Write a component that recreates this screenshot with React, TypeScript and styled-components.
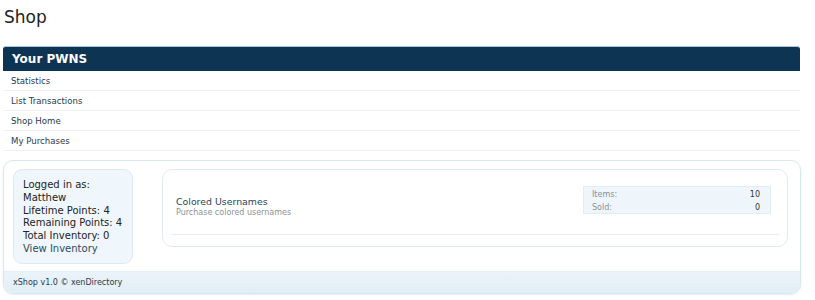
import React from 'react';
import styled, { createGlobalStyle } from 'styled-components';

const GlobalStyle = createGlobalStyle`
  body {
    margin: 0;
    background: #fff;
    font-family: "DejaVu Sans", Verdana, sans-serif;
  }
`;

const links = ['Statistics', 'List Transactions', 'Shop Home', 'My Purchases'];

function App() {
  return (
    <Page>
      <GlobalStyle />
      <Title>Shop</Title>
      <Menu>
        <MenuHeader>Your PWNS</MenuHeader>
        {links.map((l) => (
          <MenuItem key={l}>{l}</MenuItem>
        ))}
      </Menu>
      <Panel>
        <PanelBody>
          <UserBox>
            <UserLine>Logged in as:</UserLine>
            <UserLine>Matthew</UserLine>
            <UserLine>Lifetime Points: 4</UserLine>
            <UserLine>Remaining Points: 4</UserLine>
            <UserLine>Total Inventory: 0</UserLine>
            <UserLink>View Inventory</UserLink>
          </UserBox>
          <Card>
            <CardRow>
              <CardInfo>
                <ItemTitle>Colored Usernames</ItemTitle>
                <ItemDesc>Purchase colored usernames</ItemDesc>
              </CardInfo>
              <Stats>
                <StatRow>
                  <StatLabel>Items:</StatLabel>
                  <StatValue>10</StatValue>
                </StatRow>
                <StatRow>
                  <StatLabel>Sold:</StatLabel>
                  <StatValue>0</StatValue>
                </StatRow>
              </Stats>
            </CardRow>
            <CardDivider />
          </Card>
        </PanelBody>
        <Footer>xShop v1.0 © xenDirectory</Footer>
      </Panel>
    </Page>
  );
}

const Page = styled.div`
  width: 815px;
  height: 300px;
  padding: 0 15px 0 3px;
  box-sizing: border-box;
  overflow: hidden;
`;

const Title = styled.h1`
  margin: 0;
  padding: 7px 0 0 1px;
  height: 39px;
  box-sizing: border-box;
  font-family: "DejaVu Sans", sans-serif;
  font-weight: normal;
  font-size: 17px;
  color: #222;
`;

const Menu = styled.div`
  display: flex;
  flex-direction: column;
`;

const MenuHeader = styled.div`
  margin-top: 7px;
  height: 24px;
  display: flex;
  align-items: center;
  padding-left: 9px;
  background: #0d3553;
  border-top: 1px solid #a9c8dc;
  border-radius: 3px 3px 0 0;
  color: #fff;
  font-weight: bold;
  font-size: 12px;
`;

const MenuItem = styled.div`
  height: 20px;
  display: flex;
  align-items: center;
  padding-left: 8px;
  border-bottom: 1px solid #eef0f2;
  box-sizing: border-box;
  font-size: 8.6px;
  color: #2a3b4b;
`;

const Panel = styled.div`
  margin-top: 9px;
  margin-right: -1px;
  border: 1px solid #d8e6ef;
  border-radius: 10px;
  overflow: hidden;
  box-shadow: 0 1px 2px #e3edf4;
`;

const PanelBody = styled.div`
  display: flex;
  align-items: flex-start;
  gap: 29px;
  padding: 8px 12px 7px 9px;
`;

const UserBox = styled.div`
  width: 120px;
  height: 95px;
  box-sizing: border-box;
  padding: 9px 9px;
  background: #f0f7fc;
  border: 1px solid #dce9f2;
  border-radius: 9px;
  display: flex;
  flex-direction: column;
`;

const UserLine = styled.div`
  font-size: 10px;
  line-height: 12.8px;
  color: #222;
`;

const UserLink = styled(UserLine)`
  color: #2b4a60;
`;

const Card = styled.div`
  flex: 1;
  height: 78px;
  box-sizing: border-box;
  border: 1px solid #e2e9ee;
  border-radius: 10px;
  padding: 16px 8px 0 8px;
  display: flex;
  flex-direction: column;
`;

const CardRow = styled.div`
  display: flex;
  align-items: flex-start;
  justify-content: space-between;
  height: 48px;
`;

const CardInfo = styled.div`
  padding: 10px 0 0 5px;
`;

const ItemTitle = styled.div`
  font-size: 9.4px;
  color: #2b4258;
`;

const ItemDesc = styled.div`
  font-size: 8px;
  color: #8c939a;
  margin-top: 1px;
`;

const Stats = styled.div`
  width: 188px;
  height: 28px;
  box-sizing: border-box;
  background: #eef6fb;
  border: 1px solid #e0edf5;
  padding: 1px 10px 0 8px;
  margin-right: 8px;
`;

const StatRow = styled.div`
  display: flex;
  justify-content: space-between;
  font-size: 8px;
  line-height: 13px;
`;

const StatLabel = styled.span`
  color: #8a8f94;
`;

const StatValue = styled.span`
  color: #333;
`;

const CardDivider = styled.div`
  height: 1px;
  background: #e7edf1;
`;

const Footer = styled.div`
  height: 21px;
  display: flex;
  align-items: center;
  padding-left: 9px;
  background: linear-gradient(#eaf3f9, #e2eef6);
  border-top: 1px solid #e6eff5;
  font-size: 8px;
  color: #2a3b4b;
`;

export default App;
